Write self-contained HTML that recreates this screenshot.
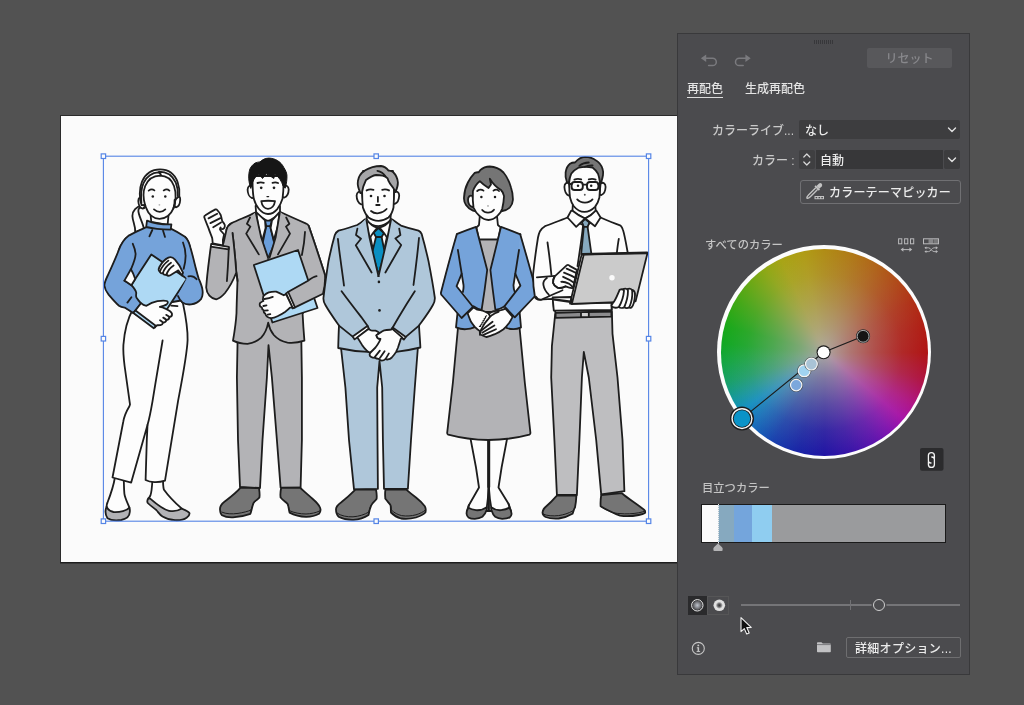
<!DOCTYPE html>
<html lang="ja">
<head>
<meta charset="utf-8">
<title>オブジェクトを再配色</title>
<style>
html,body{margin:0;padding:0;}
body{width:1024px;height:705px;overflow:hidden;background:#525252;position:relative;font-family:"Liberation Sans","Noto Sans CJK JP",sans-serif;}
.abs{position:absolute;}
.t{will-change:transform;}
#artboard{left:60px;top:115px;width:619px;height:446px;background:#fbfbfb;border-left:1px solid #2b2b2b;border-top:1px solid #2b2b2b;border-bottom:1px solid #1e1e1e;box-shadow:0 0.6px 0 #2a2a2a;box-sizing:content-box;}
#art{left:0;top:0;width:1024px;height:705px;}
#panel{left:677px;top:33px;width:293px;height:642px;background:#4b4b4e;border:1px solid #39393b;box-sizing:border-box;}
.t{white-space:nowrap;font-weight:500;}
.lbl{color:#c9c9c9;font-size:12px;}
.dd{position:absolute;background:#3d3d3f;border-radius:2px;}
</style>
</head>
<body>
<div id="artboard" class="abs"></div>
<svg id="art" class="abs" width="1024" height="705" viewBox="0 0 1024 705">
<defs>
<style>
.s{stroke:#1d1d1d;stroke-width:1.8;stroke-linejoin:round;stroke-linecap:round;}
.l{fill:none;stroke:#1d1d1d;stroke-width:1.8;stroke-linejoin:round;stroke-linecap:round;}
.w{fill:#fdfdfd;}
.bl{fill:#75a3da;}
.lb{fill:#aed9f4;}
.gy{fill:#b3b3b6;}
.sh{fill:#757575;}
.sg{fill:#afc7da;}
path.bl:not(.s){stroke:#75a3da;stroke-width:.7}
path.gy:not(.s){stroke:#b3b3b6;stroke-width:.7}
path.sg:not(.s){stroke:#afc7da;stroke-width:.7}
</style>
</defs>
<g id="fig1">
  <!-- ponytail -->
  <path class="s w" d="M142 205.3 C136.5 206.5 132.3 210.5 132.4 216 C132.6 221.5 135.6 225.5 135.2 232 L144 229 C142.8 222  137.8 214.5 138.4 210 C138.8 208 140.5 207 142.5 207.6 Z"/>
  <!-- neck -->
  <path class="s w" d="M150.5 214 L151.3 222 L167.6 225 L168.6 214 Z"/>
  <!-- blouse torso -->
  <path class="s bl" d="M146.3 227.2 C140 230 134 232.6 128.8 235.6 C123.5 239.5 120.5 245 118.6 250.5 L126 300 L150 305 L182 302 L192 290 L190 247.5 C188.8 242.5 187.5 239 185 236.8 C180 233.5 175.5 230.8 170.8 228.6 Z"/>
  <!-- collar -->
  <path class="s bl" d="M147 220.6 C154 223.4 163 224.6 171.4 224.4 L170.7 229.6 C162 229.5 153 228.7 146.2 226.9 Z"/>
  <path class="l" d="M152.3 230 L149.4 236.3 M163 230.6 L165 236.9"/>
  <!-- left foot -->
  <path class="w" d="M114.6 476 C113 488 110 496 107.5 502.5 C106 506.5 105.3 510 105.6 513.8 L130 509 C128 504 125 498 124.4 493.8 C124 490 124 486 123.8 478 Z"/>
  <path class="l" d="M114.8 478 C113.4 487 110 496 107.5 502.5 C106.8 504 106.5 505.4 106.6 506.5 M123.8 480 C124 486 124 490 124.4 493.8 C125 498 128 504 129.4 507.6"/>
  <path class="s gy" d="M106.6 506.5 C105.2 510 105 514.5 107.5 518.2 C111 520.6 117 520.6 121.3 520 C126 519 129.6 516.5 129.8 512 C130 510 129.8 508.6 129.4 507.6 C127 510.5 120 512.4 113.5 512 C110 511.5 107.8 509.5 106.6 506.5 Z"/>
  <!-- right foot -->
  <path class="w" d="M152.4 478 C152 488 151.5 492.5 150.4 495.5 C149.6 497.2 148.6 498.2 148 498.8 L160 509 L181.5 509 C176 503.5 168.5 496 163.8 489.4 C163.2 487 163 484.5 163 478 Z"/>
  <path class="l" d="M152.4 480 C152 488 151.5 492.5 150.4 495.5 C149.6 497.2 148.8 498 148.4 498.4 M163 479 C163 484.5 163.2 487 163.8 489.4 C168.5 496 176 503.5 181.8 508.6"/>
  <path class="s gy" d="M148.4 498.4 C147.2 500 147 501.6 147.8 503 C150 505.5 153.5 507.5 156.3 510 C158.5 512.5 160 515 162.5 516.5 C166 518.6 170.5 520 175 520.2 C179.5 520.4 184 519.6 186.6 517.8 C189 516 189.8 514.2 189.4 513 C188.5 511.6 186 510.3 181.8 508.6 C178 511 173 511.6 169 510.8 C163 509.5 157 504.5 150.2 498.6 Z"/>
  <!-- pants -->
  <path class="s w" d="M133 309 C128 318 124.5 330 123.4 345 C123 352 123.6 358 124.6 366 L130 404.4 L129.4 406.3 C126 412 124 417 123.2 422 L112.5 477.5 L131.2 482.6 L147.5 425 L146.8 440 L145.6 480 C150 482.4 158 483 165 480.6 L178 401.3 C182 380 187 355 187.6 340 C187.8 330 186.5 320 183 303.5 L181 300.5 Z"/>
  <path class="l" d="M162.6 340.5 C160 355 156 380 152.5 401.3 C151 410 149.5 418 147.5 425 M171.2 305.6 L177.5 306.2"/>
  <!-- folder -->
  <path class="s lb" d="M151.3 254.4 L186.9 278.8 L155 327.5 L119.4 303.2 Z"/>
  <!-- her left arm (viewer right) -->
  <path class="bl" d="M185 236.9 C188 239.5 189.4 243.5 190.4 247.5 C192.5 254.5 194 261 195.3 266.3 C196.5 271 197.6 275.5 198.8 278.8 C200.5 282.5 202 286 202.5 290 C203 294 202.6 296.5 201.2 298.8 C198.5 302 195 303.8 191.2 304.4 C187.5 304.8 184.5 304 182.4 302.4 C180.5 300.8 179 298.5 178 296 L186.9 278.8 C185 275 184 272 183.8 268.8 C185 264.5 185.8 260.5 185.6 256 C185.4 251.5 184.5 247 183 242.5 Z"/>
  <path class="l" d="M185 236.9 C188 239.5 189.4 243.5 190.4 247.5 C192.5 254.5 194 261 195.3 266.3 C196.5 271 197.6 275.5 198.8 278.8 C200.5 282.5 202 286 202.5 290 C203 294 202.6 296.5 201.2 298.8 C198.5 302 195 303.8 191.2 304.4 C187.5 304.8 184.5 304 182.4 302.4 C180.5 300.8 179 298.5 178 296"/>
  <path class="l" d="M183 242.5 C184.8 247 185.6 252 185.6 256 C185.6 260.5 184.8 264.8 183.7 268.8 M188.4 276.4 C191.5 275.6 194.6 276.8 196.6 279.2"/>
  <!-- upper hand -->
  <path class="s w" d="M183 272.6 C181.5 268.5 178.5 263.5 175 259.6 C173 257.4 170.6 256.6 168.4 257.6 C164.6 259.4 161.4 263.2 159.4 267 C158.4 269 158.4 270.8 159.8 271.6 C160.4 273 161.6 273.6 162.8 273.2 C163.6 274.6 165 275.2 166.4 274.6 C167.4 275.8 169 276 170.4 275.2 C172.6 274 175.6 272 178.4 270.4 L182 275.6 Z"/>
  <path class="l" d="M159.8 271.6 C161.4 267.6 164.4 263.6 168.4 260.6 M162.8 273.2 C164.2 269.2 167.2 265.4 171 262.8 M166.4 274.6 C167.6 271 170.2 267.6 173.6 265.4"/>
  <!-- her right arm (viewer left) -->
  <path class="bl" d="M128.8 235.6 C123.5 239.5 120.5 245 118.6 250.5 C114.5 261 110.5 269.5 107.5 276 C105.6 280 104.4 283 104.4 285.5 C104.8 289 106.5 292 108.6 294.6 C112 298.6 115.5 302.8 119 305.8 C120.6 307 122.6 307.4 124.6 307.6 L133.4 313 L141 303.4 C139 301 137.4 299 136.4 297.4 C135.6 295.8 136.4 294.2 136.2 292.6 C135.6 290.2 133.6 287.6 131.4 285.2 C129.2 283.4 126.8 281.8 124.4 280.6 C127 277 129 273.5 130.6 270 C133 264.5 135.6 259 135.6 253.8 C135.4 250 134 246.5 132.8 243.8 Z"/>
  <path class="l" d="M128.8 235.6 C123.5 239.5 120.5 245 118.6 250.5 C114.5 261 110.5 269.5 107.5 276 C105.6 280 104.4 283 104.4 285.5 C104.8 289 106.5 292 108.6 294.6 C112 298.6 115.5 302.8 119 305.8 C120.6 307 122.6 307.4 124.6 307.6 L133.4 313 L141 303.4 C139 301 137.4 299 136.4 297.4 C135.6 295.8 136.4 294.2 136.2 292.6 C135.6 290.2 133.6 287.6 131.4 285.2 C129.2 283.4 126.8 281.8 124.4 280.6"/>
  <path class="l" d="M132.8 243.8 C134 246.5 135.4 250 135.6 253.8 C135.6 259 133 264.5 130.6 270 M131.4 297.2 L127.4 302.6"/>
  <path class="s w" d="M130.9 269.2 L124.4 280.6 L131.4 285.2 L135.2 279 C134.2 275.6 132.8 272.2 130.9 269.2 Z"/>
  <!-- lower hand -->
  <path class="s w" d="M141 303.2 L135 311 L155 326.2 C156.4 325.4 158 325 160.6 325 C162 324.8 162.8 323.8 163 322.6 C165 322.6 166.2 321.6 166.4 320 C168.4 319.8 169.4 318.6 169.4 317 C171.2 316.8 172.2 315.6 172 313.8 C171.4 311.8 168.6 310 165.4 308.6 C163.4 307.6 161.4 307 159.8 306.8 C162 306.4 164.6 305.6 166.4 304.6 C168 303.4 168.4 301.8 166.8 301 C164.4 300.2 160.6 300.6 157.4 301.2 C153 302 149 304 146.4 305.8 C144.4 305.6 142.4 304.6 141 303.2 Z"/>
  <path class="l" d="M163 322.6 C162 321.6 161 320.8 160 320.2 M166.4 320 C165.4 319 164.4 318.2 163.2 317.6 M169.4 317 C168.4 316 167.4 315.2 166.2 314.8"/>
  <path class="s lb" d="M133.1 312.8 L153.8 328.2 L155.7 325.7 L135.5 310.5 Z"/>
  <!-- head -->
  <path class="s w" d="M143 197.6 C140.6 196 138.2 197.6 138.3 201 C138.5 204.6 140 208 142.6 208.6 C144 208.6 144.8 207.6 145.2 206.4 Z"/>
  <path class="s w" d="M176.2 196 C178.6 194.8 180.6 196.6 180.2 200 C180 203.6 178.6 206.8 176 207.3 C175 207.3 174.4 206.6 174.2 205.4 Z"/>
  <path class="s w" d="M141.6 205.2 C139.2 199 139 189 142 181.6 C145.6 173.4 152.6 169.4 160 169.4 C168 169.4 174.6 174 177.6 182 C179.4 187 179.8 192 179.3 196.4 L174.6 200 C174.8 204 174.2 206.4 173.4 208.4 C171 214.6 165.6 218.8 159.5 218.8 C153.6 218.8 148.4 214.4 146 207.6 C145.6 206.6 145.4 205.8 145.2 205 Z"/>
  <path class="l" d="M141.4 203 C140.6 195 141.4 187.6 143.6 182.8 C146.6 176.4 152.6 172.6 158 172.4 C159.6 172.6 160.6 173.6 161 175.2 M159 171.6 C166.4 171.6 172.6 175.6 175.8 182.6 C177.6 187 178.1 192 177.8 196"/>
  <path class="l" d="M145.2 205.4 C143.2 199 143.2 191 145.2 186 C148 179.6 153.6 175.8 160 175.7 C166.6 175.8 171.6 179.6 174 186 C175.4 190 175.8 194 175.6 198 C175.4 202 174.6 205.4 173.4 208.4"/>
  <path class="l" d="M148.7 190.6 C150.6 189.2 152.8 189.2 154.4 190.4 M163.7 190.4 C165.6 189.2 167.8 189.2 169.4 190.6 M154 209.4 C157.6 212.6 162 212.6 165.3 209.4" />
  <circle cx="152.8" cy="196.5" r="1.25" fill="#1d1d1d"/><circle cx="165.3" cy="196.5" r="1.25" fill="#1d1d1d"/>
  <circle cx="159.4" cy="204.8" r="0.9" fill="#b4b4b4"/>
  <circle cx="143.8" cy="207.6" r="1" fill="#1d1d1d"/><circle cx="175.3" cy="206.4" r="1" fill="#1d1d1d"/>
</g>
<g id="fig2">
  <!-- trousers -->
  <path class="s gy" d="M238 318 L236.9 377.5 L238 440 L240 487 L260 488 L262.5 440 L266.9 377.5 L268.5 345.2 L271.9 377.5 L276.9 440 L280.6 487.6 L300.6 487.4 L301.9 440 L301.9 377.5 L301 318 Z"/>
  <!-- shoes -->
  <path class="s sh" d="M240.6 487.6 C236 493 230 497.5 225 501.3 C221.5 504 219.8 506.5 220 509.5 C220.2 512.5 220.8 514.2 222 515.2 C225 517 229 517.6 233 517.4 C239 517 245.5 515.6 250.4 513.8 C252 509.5 252.2 505 253.8 502.5 C255.5 500.5 258 499.5 259.4 497.5 C260 494.5 259.4 491 259 488.2 Z"/>
  <path class="l" d="M222 512.2 C226 514 232 514.2 238 513.4 C243 512.6 248 511.4 251 510 C252.6 506 253 503.6 254.2 502.4 C256 500.6 258.4 499.6 259.4 497.5" style="stroke-width:1"/>
  <path class="s sh" d="M281.2 487.8 C280.4 491.5 280.2 495 280.6 497.5 C282.5 500 285.5 501.8 287.5 503.8 C289 506.5 288.6 510 289.6 512.6 C294 515 300 516.6 306.2 516.8 C311 516.8 316 515.6 319 513.8 C320.6 512 320.8 509.5 320 507.5 C318.5 504.2 315.5 501.4 312.5 498.8 C308.5 495.2 304 491.4 300 487.6 Z"/>
  <path class="l" d="M280.6 497.5 C282.5 500.4 285.8 502 287.6 504 C289 506.4 288.6 509 289.4 510.6 C294 512.8 300 514 306 514 C311 513.8 316 512.8 319.6 511" style="stroke-width:1"/>
  <!-- folder back (below arm) -->
  <!-- jacket body -->
  <path class="s gy" d="M255.2 212.6 C247 216.5 238 220 231.4 223.2 C228.6 224.8 227.2 227 226.4 230 L232.5 233 C234 245 235.4 260 236.3 272.5 C237 277 237.5 279 237.5 281 C237 295 236.6 305 236.5 313 C236 322 234.5 332 233 340.6 C237 342.6 242 343.8 247.5 343.8 C252.5 343.2 257.5 341 261.2 337.6 C264.5 334 267 329 268.2 322.6 C269 327 271 331.5 273.8 335 C277.5 339.2 282 341.6 287.5 342.6 C293 343.2 299 342.4 304.4 340.6 C303.6 331 303 322 302.6 313.8 L325 275 C321 262 314.5 243 308.8 226 C308 224.5 307.2 223.8 306.2 223.6 C298 220 289 216 280.4 212 Z"/>
  <!-- shirt -->
  <path class="s w" d="M256 212.8 L261.2 237.5 L268 258.8 L275.6 237.5 L279.6 212.8 Z"/>
  <!-- neck -->
  <path class="s w" d="M255.6 206 L256.2 214 L268 221.6 L280 214 L280 206 Z"/>
  <!-- tie -->
  <path class="s" style="fill:#6a9edb" d="M265 220.6 L272 220.6 L270.2 226.2 L274.4 243.8 L268 258.4 L262.5 243.8 L266.2 226.2 Z"/>
  <path class="l" d="M266.2 226.2 L270.2 226.2"/>
  <!-- collars -->
  <path class="s w" d="M256.2 212.2 L258 225.6 L262 241.2 L265.6 228 L265 220.4 Z"/>
  <path class="s w" d="M279.5 212.2 L278 225.6 L273.8 240 L270.6 228 L272 220.4 Z"/>
  <!-- jacket inner edges & lapels -->
  <path class="gy" d="M255.6 212.6 L250 217.5 L246.9 223.8 L250.4 226.6 L246.2 233.6 L258.8 254.4 L268 258.8 L261.2 237.5 Z"/>
  <path class="l" d="M258.8 254.4 L246.2 233.6 L250.4 226.6 L246.9 223.8 L250 217.5 M255.8 212.8 L261.2 237.5 L268.4 258.8"/>
  <path class="gy" d="M280.2 212.2 L286.2 217.5 L289.4 223.8 L286 226.6 L290 233.6 L278 254.4 L269 258.6 L275.6 237.5 Z"/>
  <path class="l" d="M278 254.4 L290 233.6 L286 226.6 L289.4 223.8 L286.2 217.5 M279.8 212.6 L275.6 237.5 L269.6 257.6"/>
  <path class="l" d="M305 232 C304.6 240 303.4 248 301.9 255"/>
  <!-- folder -->
  <path class="s lb" d="M253.8 265 L298 250 L317.5 308 L272.4 322.5 Z"/>
  <!-- left arm (viewer right) forearm -->
  <path class="gy" d="M308.8 226 C314.5 243 321 262 325 275 C325.4 282 324.6 288 323 293.8 L294.5 307.6 L286.4 292.6 L316.2 276.2 Z"/>
  <path class="l" d="M308.8 226 C314.5 243 321 262 325 275 C325.4 282 324.6 288 323 293.8 L294.5 307.6 M288.4 291.8 L307.6 281 C310.6 278.8 313.6 276.6 316.6 276.2"/>
  <path class="s w" d="M286 293.4 L288.2 292 L295 307.4 L292.6 308.4 Z"/>
  <!-- hand on folder -->
  <path class="s w" d="M263.8 295.6 C265.5 294 267 293 268.8 292.4 C271.5 291.6 274 291.4 276.2 291.6 C279 292.6 281.5 294 283.8 295.3 L286 294 L292.4 307.4 L290 307.6 C288.5 309.2 286.8 310.6 285 311.9 C282.5 313.6 280 315 277.5 316.2 C275.5 317.2 273.4 318 271.2 318.1 C269.8 318 268.4 317.6 267.5 316.9 C266.4 316.2 265.6 315 265.3 313.8 C264.2 313 263.4 311.6 263.4 310 C262.4 309.6 261.9 308.6 261.9 307.5 C260.6 307 259.6 306.2 259.7 305 C259.6 304 259.8 303.2 260.3 302.8 C261.2 302 262.4 301.4 263.4 301 C262.8 300 262.8 298.8 263.1 298 C263 297.2 263.2 296.4 263.8 295.6 Z"/>
  <path class="l" d="M264.4 299 C267 298.6 270 298 272.8 296.9 M263.4 306 L266.5 305.3 M264.7 310.6 L267.8 310.3 M267.8 314.7 L270.3 314.2"/>
  <!-- right arm raised (viewer left) -->
  <path class="gy" d="M231.4 223.2 C228.6 224.8 227.2 227 226.4 230 C225.6 234 224.8 238 223.6 243.4 L210.8 246.6 C209 260 207 275 206.2 287.5 C206.4 291 207.6 293.6 209.4 295.6 C211.4 297.8 213.6 299 216.2 299.4 C219.4 298.6 222.4 296 225 293 C229 288 233 281 236.3 272.5 C235.4 260 234 245 232.5 233 Z"/>
  <path class="l" d="M231.4 223.2 C228.6 224.8 227.2 227 226.4 230 C225.6 234 224.6 238 223.4 243.4 M210.8 246.6 C209 260 207 275 206.2 287.5 C206.4 291 207.6 293.6 209.4 295.6 C211.4 297.8 213.6 299 216.2 299.4 C219.4 298.6 222.4 296 225 293 C229 288 233 281 236.3 272.5 M232.5 233 C234 245 235.4 260 236.3 272.5 C237 277 237.5 279 237.5 281 M228.8 247.6 C228.4 258 227.8 270 226.9 281.2"/>
  <path class="s w" d="M211.2 243.8 L228.8 246.9 L228.6 249.4 L210.8 246.6 Z"/>
  <!-- fist -->
  <path class="s w" d="M212.7 243.4 C212.6 241.5 212.5 239.8 212.2 238.1 C211 234.8 209.6 231.5 208.5 228.1 C207 224.4 205.4 220.6 204.2 217 C204.2 216.2 204.6 215.6 205.4 215.2 C208.6 213.2 212 211.2 215.4 209.4 C216 209.2 216.8 209.4 217.2 210 C218.6 211.5 219.8 213.2 220.7 215 C221.4 217 221.8 219 222.2 221.2 C223.2 222.4 224.2 223.6 224.8 225 C225 226.2 224.8 227.2 224.1 228.1 C223.2 229.2 222 229.4 221 228.6 C220.6 228.2 220.6 227.8 220.7 227.5 C220.2 228 220 228.8 220 229.4 C221.2 231.2 222.8 232.8 224.1 234.4 C223.6 236.4 223.2 238.2 222.9 240 L223 245.4 Z"/>
  <path class="l" d="M208.5 218.4 L217.2 213.8 M210.4 223.1 L220.4 218.1 M213.2 227.2 L221 222.5"/>
  <!-- head -->
  <path class="s w" d="M252.8 186 C250.2 184.6 247.8 186 247.6 189.5 C247.6 193 249.2 197 251.8 198 C252.8 198.2 253.6 197.6 254 196.6 Z"/>
  <path class="s w" d="M283.2 186 C285.8 184.6 288.6 186 288.7 189.5 C288.6 193 287 196.6 284.4 197.5 C283.4 197.7 282.6 197 282.2 196 Z"/>
  <path class="s w" d="M252.6 176 C252.4 184 252.6 192 253.8 198.8 C255 203 256.5 206 258.8 208.8 C261.5 212 264.5 214 268 214 C271.5 214 274.8 212 277.5 208.8 C279.6 206 281.2 203 282.5 198.8 C283.4 192 283.8 184 283.4 176 Z"/>
  <path d="M250.8 188.4 C249.2 184 248.4 179 248.8 175 C249 172.4 249.4 170.4 250 168.8 C251.2 166.4 252.8 164.6 255 163.1 C256.6 162.4 258.2 162 260 161.9 C262.4 159.6 265.4 158.2 268.8 158.1 C272 158.2 275 159 277.5 160.6 C280.2 162.2 282.4 164.6 283.8 167.5 C285.4 170 286.6 172.4 286.9 175 C287.2 179.4 286.4 184 285.2 188.2 L283.1 186.2 C282.4 183.6 281.4 181.4 280 179.4 C278.4 177.4 276.8 175.4 275 173.8 L273.8 178.5 C271.4 176.6 268.8 175 266.2 173.8 L262.5 178.5 C261.4 176.8 260.2 175.4 258.8 174.4 C257.6 175 256.6 175.8 255.6 176.9 C254.2 178.6 253.2 180.6 252.5 182.6 Z" fill="#161616" stroke="#161616" stroke-width="1" stroke-linejoin="round"/>
  <path class="l" style="stroke-width:1.9" d="M257.5 183 C259.4 182.2 261.8 182.2 263.8 182.8 M272.5 182.8 C274.4 182.2 276.4 182.2 278 183"/>
  <circle cx="261.2" cy="187.8" r="1.35" fill="#1d1d1d"/><circle cx="274" cy="187.8" r="1.35" fill="#1d1d1d"/>
  <path class="l" d="M267 196.6 L268.6 196.6" style="stroke-width:1.3"/>
  <path class="s w" d="M261.3 201.2 C265.8 200.6 270.4 200.6 275 201.2 C274.4 205.6 271.6 208.8 268 208.8 C264.6 208.8 261.9 205.6 261.3 201.2 Z"/>
</g>
<g id="fig3">
  <!-- trousers -->
  <path class="s sg" d="M340.8 346 L345.4 387.5 L349 440 L354 489.4 L377.9 488.8 L377.5 440 L377.2 387.5 L379.5 361.2 L382.2 387.5 L382.9 440 L384 488.8 L407.9 488.8 L411 440 L414.8 387.5 L418 346 Z"/>
  <!-- shoes -->
  <path class="s sh" d="M355.4 489.6 C351 494 346 498.5 341 502.5 C337.5 505 335.8 507 336 509.6 C336 513 337 515.5 339 517 C343 519 348 520 353.5 519.8 C359 519.4 364.5 517.6 368.5 515 C369.5 511 370 506.5 372.2 503.8 C373.6 502 375.6 500.6 376.6 498.8 C377 495.6 376.6 492.6 376 489.6 Z"/>
  <path class="l" style="stroke-width:1" d="M337 513 C341 516 347 517 353 516.8 C359 516.4 364.6 514.6 368.8 512 C369.6 508.6 370.4 505.6 372.4 503.6"/>
  <path class="s sh" d="M385.4 489.6 C385 492.6 385 496 385.4 498.8 C387 501 389 503 390.4 505 C391.2 507.5 390.6 510 391 512.5 C394 515.6 397.4 517.6 401 518.5 C406 519.2 411 518.8 416 517.5 C420 516.2 423.4 514.6 425.4 512.5 C426 510.4 425.8 508.2 424.8 506.2 C422.5 503 419.4 500.2 416 497.5 C412.6 495 409.4 492.4 406 489.4 Z"/>
  <path class="l" style="stroke-width:1" d="M385.4 498.8 C387 501.4 389.4 503.2 390.6 505.4 C391.4 507.4 391 509 391.4 510 C394.4 513 398 514.8 401.6 515.6 C406.6 516.4 411.4 516 416 514.8 C420 513.6 423.2 512 425.2 510.2"/>
  <!-- jacket body -->
  <path class="s sg" d="M364.8 219.4 C362.5 221.5 360 223.4 357.2 225 C351 227.2 344.6 229 338.5 230.6 C336.8 231.6 335.6 233 334.8 235 C332.5 243 330.4 252 328.5 261.2 C326.6 273 325 285 323.5 297.5 C323.2 300 323.8 302.6 325.4 305 C329 311.5 334 318.5 339 325.6 C338.6 333 338.4 340.5 338.2 348 C348 350.2 358 351.4 367.9 351.9 L396 351.9 C404.5 351 412.5 349.4 420.4 347.5 C420 340 419.4 332.6 419 325.6 C424.5 318 429.4 311.5 432.9 305 C434.4 302.6 435 300 434.8 297.5 C433 285 430.8 273 428.5 261.2 C426.5 252 424.2 243 421.6 233.8 C421 232.4 420 231.4 418.5 230.6 C412.5 229 406.5 227.4 401 225.6 C398 223.8 395.2 221.6 392.2 219.4 Z"/>
  <!-- shirt -->
  <path class="s w" d="M366.6 219 L378.5 276.2 L390.8 219 Z"/>
  <!-- neck -->
  <path class="s w" d="M366.6 214 L366.8 221.4 C370 224 374 226.2 378.5 226.2 C383 226 387 223.6 390.4 220.8 L390.8 214 Z"/>
  <!-- tie -->
  <path class="s" style="fill:#0b8fc2" d="M373.5 232.6 L378.5 228 L384 233 L381.6 237 L384.8 252.5 L378.5 274.4 L372.2 252.5 L376 237 Z"/>
  <path class="l" d="M376 237 L381.6 237"/>
  <!-- collars -->
  <path class="s w" d="M366.6 219.6 L367.4 229 L369.6 238 L373.4 232.6 L377.4 227.6 C373 226.4 369.4 223.4 366.6 219.6 Z"/>
  <path class="s w" d="M390.8 219.6 L390 229 L387.4 238 L384 233 L379.6 227.6 C384 226.4 388 223.4 390.8 219.6 Z"/>
  <!-- lapels -->
  <path class="sg" d="M365.4 219.6 L357.4 228.6 L356 235 L361 238.8 L355.8 245.2 L371.6 272.5 L378.5 276.2 L369.6 238 L366.6 220 Z"/>
  <path class="l" d="M371.6 272.5 L355.8 245.2 L361 238.8 L356 235 L357.4 228.6 M366.4 219.8 L369.6 238 L378.5 276.2"/>
  <path class="sg" d="M391.4 219.6 L399.2 228.6 L400.4 235 L395.4 238.5 L401.2 245 L385.4 272.5 L378.5 276.2 L387.4 238 L390.8 220 Z"/>
  <path class="l" d="M385.4 272.5 L401.2 245 L395.4 238.5 L400.4 235 L399.2 228.6 M391 219.8 L387.4 238 L378.5 276.2"/>
  <path class="l" d="M337.9 238.8 C339.5 254 342 270 344 285.6 M419 238 C417.5 254 415.5 270 413.5 285 M341.6 291.2 C348 300 355 309 361.6 317.5 L367.9 326.2 M414.8 291.2 C409 300 403.5 309 398.5 317.5 L392.4 328"/>
  <path class="l" d="M339 325.6 L352.7 336.6 M419 325.6 L405.8 336.9"/>
  <circle cx="378.9" cy="281.9" r="1.3" fill="#1d1d1d"/><circle cx="379.5" cy="310.4" r="1.3" fill="#1d1d1d"/>
  <!-- cuffs -->
  <path class="s w" d="M352.7 336.6 L367.4 326 L369 328.6 L354.6 339.4 Z"/>
  <path class="s w" d="M405.8 336.9 L392.7 327.5 L391 330 L403.8 339.6 Z"/>
  <!-- left hand (viewer left) -->
  <path class="s w" d="M357.4 337.4 L368.4 329 C369.4 329.6 370.2 330 371.1 330.3 C372.6 330.6 374 330.5 375.5 330.6 C377 331.2 378.2 332 379.2 332.8 L376.4 335.3 C376.6 336.4 377 337.4 377.7 338.1 C378.6 338.6 379.6 338.7 380.5 338.8 L381 352 L369.6 352.5 C368.4 352 367.6 351.4 366.8 350.6 C365 349 363.6 347.4 362.4 345.6 C360.8 343 359.4 340.2 357.4 337.4 Z"/>
  <!-- right hand -->
  <path class="s w" d="M380.5 332.5 C381.6 331.6 382.8 330.8 384.2 330.3 C386.5 329.8 388.8 329.8 391.1 329.7 L392 328.6 L402.4 337.6 C401.8 338 401.2 338.4 400.8 338.8 C400 341.6 399 344.6 398 347.5 C397.4 349 396.8 350.4 396.1 351.9 C394.8 354 393.4 355.8 391.8 357.5 C390.6 358.6 389.4 359.2 388 359.4 C387 359.6 386.2 359.4 385.6 358.8 C384.4 360 383.2 360.6 381.8 360.6 C380.6 360.4 379.6 359.8 378.6 358.8 C377.4 358.8 376 358.6 374.9 357.8 C373.6 357.8 372.2 357.6 371.1 356.9 C370.2 356.4 369.6 355.6 369.6 354.7 C369.6 353.8 370 353 370.5 352.5 C372.2 350.8 373.8 349.2 375.5 347.5 C377 345.6 378.2 343.8 379.2 341.9 C379.8 340.8 380.2 339.8 380.5 338.8 C379 338.8 378 338.4 377.5 337.8 C377 337 376.6 336.2 376.4 335.3 Z"/>
  <path class="l" d="M379.9 350.6 L374.9 356.9 M384.6 351.2 L379.9 358.1 M388.9 353.4 L386.1 358.1"/>
  <!-- head -->
  <path class="s w" d="M362 192.4 C359.4 190.6 356.8 192 356.6 195.5 C356.6 199.5 358.4 203.6 361.2 204.4 C362.2 204.6 363 204 363.4 203 Z"/>
  <path class="s w" d="M394.2 192.4 C396.6 190.6 399.2 192 399.2 195.5 C399 199.5 397.4 203 394.8 203.8 C393.8 204 393 203.4 392.8 202.4 Z"/>
  <path class="s w" d="M363 171 C361.8 188 361.8 198 362.9 207.5 C364.2 211.5 366 215 368.5 217.5 C371.5 219.8 375 220.8 378.5 220.8 C382 220.8 385.5 219.6 388.5 217.5 C391 215 392.6 211.5 393.5 207.5 C394.2 198 394.4 188 393 171 Z"/>
  <path class="s" style="fill:#a6a6a8" d="M360.4 193 C358 188 357.4 184 357.9 181 C358.6 176.5 361 172.8 364.8 170.6 C369.5 167.6 375.5 166 381 166 C384 166.4 386.5 168 388.5 170.6 C390.4 170.4 392.2 171 393.5 172.5 C396 175 397.6 178.5 397.9 182.5 C398 185.5 397 188.6 395.6 192 C394 188.6 392 186 390 183.6 C388.8 181.6 387.8 180 387.6 178.4 C386.4 177 384.6 176 382.6 175.6 C380 175 377.6 175 376 175 C372.5 175.6 369.5 177.4 366 180 C364 184 362.4 188.6 361.8 193 Z"/>
  <path class="l" d="M377.4 170.8 C380.4 171.4 383.4 173 385.4 176.2"/>
  <path class="l" style="stroke-width:1.9" d="M366.6 190.4 C368.6 189.4 371.4 189.2 373.5 189.8 M382.2 189.8 C384.4 189.2 387 189.4 389 190.4"/>
  <circle cx="371" cy="196" r="1.3" fill="#1d1d1d"/><circle cx="384.5" cy="196" r="1.3" fill="#1d1d1d"/>
  <path class="l" d="M377.9 197 L377.9 201.8 M376.2 205 L379.6 205 M371 211 C375 214.6 382 214 386.6 209"/>
</g>
<g id="fig4">
  <!-- legs -->
  <path class="s w" d="M470.4 438 L476 467.5 L479 487.5 L469 505 L467 511 L488.5 511 L488.5 438 Z"/>
  <path class="s w" d="M507.2 438 L501.6 467.5 L498.5 487.5 L508.5 503.8 L511 511 L489 511 L489 438 Z"/>
  <path class="l" style="stroke-width:3" d="M488.7 440 L488.7 487"/>
  <!-- shoes -->
  <path class="s sh" d="M468.4 507.8 C467 510 466.4 512 466.6 514 C466.8 515.6 467.4 516.6 468.4 517.4 C470.4 518.6 472.6 518.8 474.8 518.8 C477.6 518.6 480.2 518 482.4 516.8 C484.4 515.2 485.8 512.6 486.6 510 C487 509 487 508 486.8 507.2 C483.5 509.6 479.6 510.4 476 510.2 C473 509.8 470.4 509 468.4 507.8 Z"/>
  <path class="s sh" d="M509.4 507.6 C510.8 510 511.6 512 511.6 514 C511.4 515.6 510.8 516.6 509.8 517.4 C507.6 518.6 505 518.8 502.2 518.8 C499.6 518.6 497.2 518 495.2 516.8 C493.2 515.2 492.2 512.6 491.4 510 C491 509 491 508 491.2 507.2 C494.2 509.6 498 510.4 501 510.2 C504.2 509.8 507 509 509.4 507.6 Z"/>
  <path class="l" d="M469 505 C468.4 506 468.2 507 468.4 507.8 M486.8 507.2 C487.6 502 488.2 495 488.5 488.8 M508.5 503.8 C509.2 505.2 509.6 506.4 509.4 507.6 M491.2 507.2 C490.2 502 489.4 495 489 488.8"/>
  <!-- skirt -->
  <path class="s gy" d="M458.5 322 L452.9 382.5 L447.2 432.6 C447 433.6 447.4 434.2 448.2 434.6 C461 438 475 439.8 488.5 440 C502 439.8 517 438 529.4 434.6 C530.2 434.2 530.6 433.6 530.4 432.6 L524.8 382.5 L519 322 Z"/>
  <!-- jacket back hem pieces -->
  <path class="s bl" d="M457.6 312 L456 327.4 C459.4 328.8 462.8 329.4 466 329.2 C469 329 471.8 328.4 474.2 327.4 L476 312 Z"/>
  <path class="s bl" d="M519.6 312 L521 327.4 C518.4 328.6 516 329.2 513.5 329.2 C511 329.2 508.6 328.8 506.6 328 L503 312 Z"/>
  <!-- inner top -->
  <path class="s gy" d="M477 239.4 L500 239.4 L497 312 L480 312 Z"/>
  <!-- neck / chest skin -->
  <path class="s w" d="M479.8 216 L479 225 L476.4 227.6 L479 239.4 L498.2 239.4 L500.6 227.4 L497.9 225 L497 216 Z"/>
  <!-- jacket left half -->
  <path class="bl" d="M476 226.9 C470 229 463.5 231.4 457.2 233.8 C456.4 234.2 456.2 234.6 456.6 235.4 L457.9 250 C459.8 262 461.8 274 463.5 285 L462.9 292 C466.5 297 470 301.6 473.5 306.2 C476.2 308 478.8 309.4 481.6 310 L484.6 290 L487.2 270 Z"/>
  <path class="bl" d="M501 226.9 C507 229 513.5 231.6 520.4 234.4 C521 234.6 521 235 520.4 235.6 L519 250 C517.2 262 515.2 274 513.5 285 L514.8 292 C511.4 297 508 301.6 504.8 306.2 C502 308 498.6 309.4 495.4 310 L492.8 290 L490.4 270 Z"/>
  <path class="l" d="M457.2 233.8 C463.5 231.4 470 229 476 226.9 L487.2 270 L484.6 290 L481.6 310 C478.8 309.4 476.2 308 473.5 306.2"/>
  <path class="l" d="M520.4 234.4 C513.5 231.6 507 229 501 226.9 L490.4 270 L492.8 290 L495.4 310 C498.6 309.4 502 308 504.8 306.2"/>
  <!-- arms -->
  <path class="bl" d="M456.6 234.4 C451 254 446 273 441 292.5 C440.8 293.6 441 294.4 441.6 295 L461.6 318 L472.9 306.8 L456.6 286.2 L461.6 273.8 L457.9 250 Z"/>
  <path class="l" d="M456.8 234.2 C451 254 446 273 441 292.5 C440.8 293.6 441 294.4 441.6 295 L461.6 318 L472.9 306.8 L456.6 286.2 L461.6 273.8"/>
  <path class="bl" d="M520.4 234.4 C526 254 531.4 273 536.6 292.5 C536.8 293.6 536.6 294.4 536 295 L514.8 317.4 L504.4 306.4 L520.4 285.6 L515.4 273.8 L519 250 Z"/>
  <path class="l" d="M520.2 234.2 C526 254 531.4 273 536.6 292.5 C536.8 293.6 536.6 294.4 536 295 L514.8 317.4 L504.4 306.4 L520.4 285.6 L515.4 273.8"/>
  <path class="l" d="M457.9 250 C459.8 262 461.8 274 463.5 285 C463.8 288 463.4 290 462.9 292 M519 250 C517.2 262 515.2 274 513.5 285 C513.4 288 514 290 514.8 292"/>
  <!-- hands -->
  <path class="s w" d="M467.6 313.3 L473.5 307.4 C474.8 308.2 476 309 477.2 309.6 C479 310 480.6 310.2 482.2 310.5 C484.4 311.4 486.6 312.4 488.5 313.6 C489.2 314.4 489.8 315.2 490 316.1 L488 322 L480 334.9 C480 333.6 479.8 332.2 479.8 331.1 C478 329.8 476.4 328.4 474.8 326.8 C473.4 325.2 472.2 323.6 471 321.8 C469.8 319 468.6 316.2 467.6 313.3 Z"/>
  <path class="l" style="stroke-width:1.1" d="M486.6 315.8 L485.4 316.6 L485.6 318 L484.2 318.6 L484.4 320 L483 320.8 L483.2 322.2 L481.8 323 L482 324.4 L480.6 325 L480.6 326.4 L479.4 326.4"/>
  <path class="s w" d="M490 313 C491.2 312.2 492.2 311.6 493.5 311.1 C495.6 310.8 497.6 310.8 499.8 310.5 C501.6 310 503.6 309.4 505.4 308.6 L512.6 316.8 C511.6 318.8 510.4 321 509.1 323 C507.4 325.2 505.6 327.4 503.5 329.2 C500.8 331.2 497.8 332.8 494.8 334.2 C492 335.4 489.4 336.4 486.6 337 C485.2 336.8 484 336.2 482.9 335.5 C481.6 335.2 480.6 334.8 480 334 C480 332.6 480.4 331.2 481 329.9 C482 328 483 326.2 484.1 324.2 C485.4 322.2 487 320.4 488.5 318.6 C489.6 317.2 490.8 316 492.2 314.9 C494 313.6 496.2 312.6 498.5 312 "/>
  <path class="l" d="M492.6 321.8 L481.3 330.5 M494.4 325.5 L482.2 332.7 M496 329.2 L483.5 334.9"/>
  <!-- head -->
  <path class="s" style="fill:#757575" d="M489.8 166.5 C486 166.5 482.6 168 480.2 170.2 C479.6 171 479 171.8 478.5 172.3 C477.2 172.2 475.8 172.4 474.7 172.8 C472 175.6 469.6 179 467.9 182.5 C465.6 187 464.2 192 464 197.5 C463.8 200.5 464.6 203 466 205 C467.8 207.6 470.2 209.6 472.9 210.6 L478 212 L500 212 L502.2 211 C505.4 210.4 508 209.4 509.8 207.5 C511.6 205.4 512.8 202.8 512.9 200 C513 196 512.4 191.6 511 187.5 C509.4 182 507 176.6 503.5 172.5 C499.6 168.6 494.8 166.6 489.8 166.5 Z"/>
  <path class="s w" d="M472.4 196 C470 194.8 468 196.6 468 200 C468.2 203.6 470 206.6 472.6 207 C473.6 207 474.2 206.4 474.4 205.4 Z"/>
  <path class="s w" d="M472.9 191.2 C472.6 197 472.8 202.6 473.5 207.5 C475 211 477 214 479.8 216.2 C482.4 218.6 485.4 220 488.5 220 C491.6 220 494.6 218.6 497.2 216.2 C499.6 214 501.4 211.6 502.2 208.8 C503.2 204.6 503.8 200.4 504 196.2 C503.6 193.6 502.6 191.6 501 190 C496.6 187.6 493 184 489.8 178.8 L491 184.4 L488.5 188 C485.4 186 482.4 184 479.8 181.2 C476.6 183.6 474.4 187 472.9 191.2 Z"/>
  <path class="l" d="M477.2 191 C478.8 189.4 481.6 189.2 483.5 190.6 M493.5 190.6 C495.2 189.2 497.6 189.4 499 191 M482.2 210 C485 213.6 491 213.6 494 209.8"/>
  <circle cx="481.4" cy="197" r="1.25" fill="#1d1d1d"/><circle cx="495" cy="197" r="1.25" fill="#1d1d1d"/>
  <circle cx="488" cy="205.9" r="0.9" fill="#a8a8a8"/>
</g>
<g id="fig5">
  <!-- trousers -->
  <path class="s" style="fill:#bebec0" d="M555.2 314 L551.9 346.2 L551.2 377.5 L554.4 440 L556.9 495 L576.9 495 L579.4 440 L581.9 377.5 L583.8 352 L588.8 377.5 L596.2 440 L601.2 494.4 L624.4 491.2 L622.5 440 L617.5 377.5 L612.5 333.8 L611.9 312 Z"/>
  <!-- shoes -->
  <path class="s sh" d="M556.9 495.6 C553 500 549 504 545 507.5 C543.4 509 542.6 510.6 542.5 512.5 C542.6 514.6 543.6 516 545.6 517 C549.6 518.6 554.4 518.8 558.8 518.5 C563.6 517.8 568.6 516.2 572.5 513.8 C573.6 511.6 573.6 509.6 575 507.5 C575.8 503.6 576.2 499.6 576.4 495.6 Z"/>
  <path class="l" style="stroke-width:1" d="M543 514 C547 516 553 516.2 558.6 515.6 C563.6 514.8 568.4 513.4 572.6 511"/>
  <path class="s sh" d="M601.2 495 C600.6 499 600.4 502.6 600.6 506.2 C603.6 508.2 606.8 509.8 610 511.2 C613.4 513 616.6 514.6 620 515.6 C626 516.6 632.6 516.2 638.8 515 C641.2 514.6 643.4 514 645 513 C645.4 512 645.2 511 644.4 510 C640.6 507 636.6 504 632.5 501.2 C628.8 498.6 625.2 496 621.9 493.2 Z"/>
  <path class="l" style="stroke-width:1" d="M600.6 506.2 C603.6 508.6 607 510 610.2 511.6 C613.4 513 616.6 513.4 620 513.6 C626 514.2 632.6 513.8 638.8 512.8 C641.2 512.4 643.6 511.6 645 510.8"/>
  <!-- belt -->
  <path class="s" style="fill:#8c8c8e" d="M555.6 312.5 L611.4 311.4 L611.4 316.6 L555.6 317.8 Z"/>
  <path class="s" style="fill:#cfcfcf" d="M581 312 L588.8 311.8 L588.8 317 L581 317.2 Z"/>
  <!-- shirt -->
  <path class="s w" d="M567.5 217.5 C560 220.6 552 223.4 545 226.2 C542.6 227.6 541 229.4 540 231.2 C539 233.4 538.4 235.4 538 237.5 C536 250 534.4 262 533 275 C533 282 533.6 290 535 297.5 C535.8 298.6 536.8 299.2 538 299.6 L553 298.8 L553.8 307.5 L555.6 312.6 L611.6 311.4 L612 300 L627.6 252 C626 243 624.4 234 623 230 C622.4 228 621.6 226.6 620.6 225.6 C614 223 607 220.4 600.6 217.5 L585 226 Z"/>
  <path class="l" d="M547.5 242.5 C549 253 550.4 264 551.4 275 M618.8 238.8 C618 243 617.4 248 616.9 252.6"/>
  <!-- neck -->
  <path class="s w" d="M572.8 205 L572.4 212 L585 218.6 L595.8 212 L595.2 205 Z"/>
  <!-- tie -->
  <path class="l" d="M583 226.2 C581.6 240 579.4 253 577.5 266.2"/>
  <path class="s" style="fill:#86a9bf" d="M581.9 222 L585 218.8 L589.4 222.5 L587.6 226.9 L591.4 254 L581.2 254 L583.8 226.9 Z"/>
  <path class="l" d="M583.8 226.9 L587.6 226.9"/>
  <!-- collars -->
  <path class="s w" d="M571.2 210.6 L567.5 217.5 L576.2 226.9 L585 218.5 C580.6 216.6 576.4 214 572.6 210.8 Z"/>
  <path class="s w" d="M596.4 210.6 L600.6 217.5 L595 226.2 L585.2 218.5 C589.4 216.6 592.6 214 595.4 210.8 Z"/>
  <!-- laptop base -->
  <path class="s w" d="M552.6 297.4 L571.2 297 L571.9 303.8 L611.6 302.6 L611.6 310 L553.8 310.6 Z" style="fill:#fdfdfd"/>
  <path class="l" style="stroke-width:2.4" d="M553.4 299.4 L570.6 301.8"/>
  <!-- laptop screen -->
  <path class="s" style="fill:#cbcbcb" d="M583.8 254.4 L647.5 253 L635.6 301.4 L571.9 303.8 Z"/>
  <path class="l" d="M581.6 254.6 L570 303.6 L571.9 303.8 M581.6 254.6 L583.8 254.4"/>
  <path class="l" style="stroke-width:2.6" d="M582.6 254.2 L647 252.8"/>
  <circle cx="612" cy="277.8" r="2.7" fill="#fafafa"/>
  <!-- left arm forearm / cuff -->
  <path class="w" d="M536 276.4 L555 275.8 L562.5 290.2 L540.6 299.9 L536 296.8 Z"/>
  <path class="l" d="M536.9 277.4 L555 275.8 M562.5 290.2 C554 294 547 297 541.6 299.6 C539.4 300.2 537.6 299.4 536 296.8 M546.9 278 C544 280 543 282.6 543.4 284.9 C544 288.6 546 292 548.8 294.6"/>
  <!-- left hand typing -->
  <path class="s w" d="M555 276.1 C558.8 272.6 562.8 269 566.9 265.2 C567.8 264.6 569 265 570 266.1 C572.4 267.4 574.6 268.6 576.9 269.9 L573 288 C571 288.6 568.4 287.6 565.6 286.4 C562.8 287.8 560 288.4 557.5 287.7 C555.4 286.8 553.8 285 553.1 283 C552.8 280.4 553.4 278.2 555 276.1 Z"/>
  <path class="l" d="M566.6 268.6 C570 270 573.4 271.6 576.6 273.3 M564 272.7 C568 274.2 572.2 276 576 278.3 M563.1 276.8 C567 278.4 571 280.4 574.4 283 M561.2 281.8 C563.6 281.6 566.4 282.4 568.8 283.6 C570.4 284.6 571.6 285.8 572.5 287 M554 277.4 C553 280 553 281.6 553.1 283 C553.8 285 555.4 286.8 557.5 287.7 C560 288.4 562.8 287.8 565.6 286.4"/>
  <!-- right hand fingers -->
  <g class="s w">
    <path d="M632.8 290 C634.4 291 635.2 293 635 295 C634.8 298 634.4 300.6 633.8 303.1 C633.2 305.2 632.4 306.8 631.5 307.5 C630.6 308 629.6 308 629 307.4 C629.6 302 630.6 296 631 290.4 Z"/>
    <path d="M628.2 288.9 C630 288.4 631.6 289 632.2 290.6 C632.6 296 631.6 302 629.4 307 C628 308.2 625.6 308.2 624.2 307.2 C625.6 301.6 626.8 295 627 289.6 Z"/>
    <path d="M624 288.9 C625.8 288.4 627.4 289 628 290.6 C628 296 626.6 302 624.2 307.2 C622.6 308.4 620 308 618.8 307 C621 301.4 622.6 295 622.8 289.6 Z"/>
    <path d="M619.6 289.8 C621.4 289 623.2 289 624 290.6 C623.6 296 621.8 302 618.8 307 C616.6 308 613.6 307.8 611.8 306.6 C611.2 305.4 611.6 304.2 612.8 303.2 C615.4 300.4 617.4 295 619.6 289.8 Z"/>
  </g>
  <!-- head -->
  <path class="s w" d="M569.2 183.4 C566.8 181.8 564.4 183.4 564.4 187 C564.6 190.6 566.2 194.6 568.8 195.6 C569.8 195.8 570.4 195.2 570.6 194.2 Z"/>
  <path class="s w" d="M600.6 183.4 C603 181.8 605.6 183.4 605.6 187 C605.4 190.6 604 194 601.4 195 C600.4 195.2 599.8 194.6 599.6 193.6 Z"/>
  <path class="s w" d="M570.5 164 C568.8 180 569 190 570 197.5 C570.8 200.8 572 203.8 573.8 206.2 C576.6 209.6 580.4 211.9 584.4 211.9 C588.4 211.9 592.2 209.8 595 206.9 C597 204.4 598.6 201 599.4 197.5 C600.2 190 600.4 180 598.5 164 Z"/>
  <path class="s" style="fill:#757575" d="M567 182.4 C565.6 178.6 565.2 175 565.6 172.5 C566.2 168.6 567.6 165.6 570 163.8 C571.6 162.8 573.4 162.4 575 162.5 C578 159 581.4 157 585 156.9 C589.4 157 593.4 158.4 596.2 160.6 C599.4 162.6 601.4 165.4 602.5 168.8 C603.2 171 603.4 173 603 175 C602.6 177.6 601.8 180 601.2 182.4 L600 182.4 C599.6 179.4 599 176.6 598 173.8 C596.6 171.2 594.8 169.2 592.5 167.5 C588 166.6 583.4 166.6 578.8 167.5 C575.8 169 573.2 171.2 571.2 173.8 C570 176.6 569.2 179.4 568.8 182.4 Z"/>
  <path class="l" d="M579.4 165.6 C582 163.6 585.4 162.6 588.8 162.5 M585 166.8 C587.4 165.6 590 165.2 592.6 165.4"/>
  <path class="l" style="stroke-width:1.9" d="M574.4 179.6 C576.4 178.8 579.2 178.8 581.2 179.4 M588.8 179.4 C590.8 178.8 593.6 178.8 595.6 179.6"/>
  <g class="l" style="stroke-width:1.9"><rect x="571.6" y="182" width="11.2" height="8" rx="3"/><rect x="587" y="182" width="11.4" height="8" rx="3"/><path d="M582.8 184.6 L587 184.6 M571.6 184.2 L568.8 183.6 M598.4 184.2 L601.6 183.2"/></g>
  <circle cx="578" cy="185.8" r="1.25" fill="#1d1d1d"/><circle cx="591.2" cy="185.8" r="1.25" fill="#1d1d1d"/>
  <circle cx="584.8" cy="194.8" r="0.95" fill="#555"/>
  <path class="l" d="M577.2 199.4 C581 203.6 589 203.6 592.5 199.4"/>
</g>
<g fill="none" stroke="#5585e6" stroke-width="1.1">
  <rect x="103.4" y="156.2" width="545.2" height="365"/>
</g>
<g fill="#fbfbfb" stroke="#5585e6" stroke-width="1.2">
  <rect x="101.2" y="153.9" width="4.4" height="4.6"/>
  <rect x="374.0" y="153.9" width="4.4" height="4.6"/>
  <rect x="646.4" y="153.9" width="4.4" height="4.6"/>
  <rect x="101.2" y="336.4" width="4.4" height="4.6"/>
  <rect x="646.4" y="336.4" width="4.4" height="4.6"/>
  <rect x="101.2" y="518.9" width="4.4" height="4.6"/>
  <rect x="374.0" y="518.9" width="4.4" height="4.6"/>
  <rect x="646.4" y="518.9" width="4.4" height="4.6"/>
</g>
</svg>
<div id="panel" class="abs"></div>
<div class="abs" style="left:814px;top:40px;width:19px;height:4px;background:repeating-linear-gradient(90deg,#37373a 0 1px,transparent 1px 2px);"></div>
<svg class="abs" style="left:677px;top:33px" width="293" height="70" viewBox="677 33 293 70">
  <g fill="none" stroke="#7a7a7e" stroke-width="1.5" stroke-linecap="round" stroke-linejoin="round">
    <path d="M704 58.2 H712.6 a3.7 3.7 0 0 1 0 7.4 H708.6"/>
    <path d="M747.6 58.2 H739.2 a3.7 3.7 0 0 0 0 7.4 H743.2"/>
  </g>
  <path d="M700.9 58.2 L706.2 54.5 V61.9 Z M750.7 58.2 L745.4 54.5 V61.9 Z" fill="#7a7a7e"/>
</svg>
<div class="abs" style="left:867px;top:48px;width:85px;height:20px;background:#58585b;border-radius:2px;"></div>
<div class="abs t" style="left:867px;top:49px;width:85px;height:20px;line-height:20px;text-align:center;color:#88888c;font-size:12px;">リセット</div>
<div class="abs t" id="tab1" style="left:687px;top:82.0px;font-size:12px;line-height:14px;color:#e4e4e4;">再配色</div>
<div class="abs" style="left:687px;top:97px;width:36px;height:1px;background:#dcdcdc;"></div>
<div class="abs t" id="tab2" style="left:745px;top:82.0px;font-size:12px;line-height:14px;color:#e4e4e4;">生成再配色</div>

<div class="abs t lbl" id="l1" style="left:712px;top:124.0px;line-height:14px;">カラーライブ...</div>
<div class="dd" style="left:799px;top:120px;width:161px;height:19px;"></div>
<div class="abs t" id="v1" style="left:805px;top:124.0px;font-size:12px;line-height:14px;color:#ececec;">なし</div>
<svg class="abs" style="left:946px;top:125px" width="12" height="10" viewBox="0 0 12 10"><path d="M2.5 3 L6 6.5 L9.5 3" fill="none" stroke="#e0e0e0" stroke-width="1.4" stroke-linecap="round" stroke-linejoin="round"/></svg>

<div class="abs t lbl" id="l2" style="left:752px;top:154.0px;line-height:14px;">カラー :</div>
<div class="dd" style="left:799px;top:150px;width:16px;height:19px;background:#3f3f41;"></div>
<svg class="abs" style="left:799px;top:150px" width="16" height="19" viewBox="0 0 16 19"><path d="M4.8 7 L7.8 4 L10.8 7 M4.8 12 L7.8 15 L10.8 12" fill="none" stroke="#d8d8d8" stroke-width="1.2" stroke-linecap="round" stroke-linejoin="round"/></svg>
<div class="dd" style="left:816px;top:150px;width:127px;height:19px;background:#373739;border-radius:0;"></div>
<div class="dd" style="left:944px;top:150px;width:16px;height:19px;background:#3c3c3e;"></div>
<div class="abs t" id="v2" style="left:820px;top:154.0px;font-size:12px;line-height:14px;color:#ececec;">自動</div>
<svg class="abs" style="left:946px;top:155px" width="12" height="10" viewBox="0 0 12 10"><path d="M2.5 3 L6 6.5 L9.5 3" fill="none" stroke="#e0e0e0" stroke-width="1.4" stroke-linecap="round" stroke-linejoin="round"/></svg>

<div class="abs" style="left:800px;top:180px;width:159px;height:22px;border:1px solid #707073;border-radius:3px;"></div>
<svg class="abs" style="left:804px;top:182px" width="24" height="20" viewBox="804 182 24 20">
  <g fill="none" stroke="#c4c4c4" stroke-width="1.3" stroke-linecap="round" stroke-linejoin="round">
    <path d="M815.5 188 L808.5 195 Q806.5 197 807 198.3 Q808.3 198.8 810.3 196.8 L817.3 189.8"/>
  </g>
  <path d="M814.5 186.5 L818.8 190.8 L820 189.6 L815.7 185.3 Z" fill="#c4c4c4"/>
  <path d="M816.5 186 L819 183.5 Q820.5 182.5 821.7 183.7 Q822.8 185 821.8 186.3 L819.3 188.8 Z" fill="#c4c4c4"/>
  <rect x="814.5" y="196" width="9.5" height="3.2" fill="#c4c4c4"/>
  <rect x="815.6" y="197" width="1.6" height="1.3" fill="#4c4c4f"/><rect x="818.5" y="197" width="1.6" height="1.3" fill="#4c4c4f"/><rect x="821.3" y="197" width="1.6" height="1.3" fill="#4c4c4f"/>
</svg>
<div class="abs t" id="pk" style="left:829px;top:186.0px;font-size:12px;line-height:14px;color:#ececec;letter-spacing:0.2px;">カラーテーマピッカー</div>

<div class="abs t" id="l3" style="left:705px;top:238px;font-size:11.3px;line-height:14px;color:#c4c4c4;">すべてのカラー</div>
<svg class="abs" style="left:890px;top:230px" width="60" height="30" viewBox="890 230 60 30">
  <g fill="none" stroke="#b9b9bb" stroke-width="1">
    <rect x="898.6" y="238.8" width="3.2" height="5"/><rect x="904.6" y="238.8" width="3.2" height="5"/><rect x="910.5" y="238.8" width="3.2" height="5"/>
    <rect x="923.5" y="238.8" width="15" height="5"/>
    <path d="M902 249.6 H911"/>
    <path d="M925 247.8 H928.5 C931 247.8 931.5 251.6 934 251.6 H936.5 M925 251.6 H928.5 C931 251.6 931.5 247.8 934 247.8 H936.5" stroke-width="0.9"/>
  </g>
  <g fill="#b9b9bb">
    <path d="M900.6 249.6 L903.4 247.4 V251.8 Z M912.2 249.6 L909.4 247.4 V251.8 Z"/>
    <path d="M938 247.8 L935.8 246.2 V249.4 Z M938 251.6 L935.8 250 V253.2 Z M924.4 247.8 L926.4 246.4 V249.2 Z M924.4 251.6 L926.4 250.2 V253 Z"/>
    <rect x="928.5" y="239.3" width="4.5" height="4" opacity="0.55"/><rect x="933.5" y="239.3" width="4.5" height="4" opacity="0.4"/>
  </g>
</svg>

<div class="abs" id="wheel" style="left:717px;top:245px;width:214px;height:214px;border-radius:50%;background:#fcfcfc;"></div>
<div class="abs" style="left:720.5px;top:248.5px;width:207px;height:207px;border-radius:50%;background:
radial-gradient(circle closest-side, rgba(174,168,162,1) 0%, rgba(174,168,162,0.86) 10%, rgba(174,168,162,0.66) 25%, rgba(174,168,162,0.38) 50%, rgba(174,168,162,0.14) 75%, rgba(174,168,162,0) 100%),
conic-gradient(from 90deg,
 #b01414 0deg, #b01440 15deg, #b01484 30deg, #a814a8 40deg, #8214b0 50deg, #6014ae 60deg, #3a14a8 75deg, #2014a4 90deg,
 #1824a6 105deg, #1840ae 120deg, #1670bc 135deg, #0e90c4 145deg, #14989c 153deg, #16a068 163deg, #12a640 175deg,
 #10a822 185deg, #18a818 195deg, #40a814 210deg, #70a814 225deg, #90a814 235deg, #a8a414 245deg, #b09c14 258deg,
 #b08c14 270deg, #b07a16 285deg, #b06418 300deg, #b04a18 315deg, #b03016 330deg, #b01e14 345deg, #b01414 360deg);"></div>
<svg class="abs" style="left:700px;top:240px" width="260" height="240" viewBox="700 240 260 240">
  <path d="M742 418.6 L823.6 352.3 L863.1 336.3" fill="none" stroke="#1c1c1c" stroke-width="1.2"/>
  <circle cx="796.2" cy="385.1" r="6.9" fill="#3a3a3a" opacity="0.75"/>
  <circle cx="796.2" cy="385.1" r="5.7" fill="#7ba7dc" stroke="#f4f4f4" stroke-width="1.2"/>
  <circle cx="804.2" cy="370.8" r="7.1" fill="#3a3a3a" opacity="0.75"/>
  <circle cx="804.2" cy="370.8" r="5.9" fill="#a0d3f1" stroke="#f4f4f4" stroke-width="1.2"/>
  <circle cx="811.4" cy="364.1" r="7.1" fill="#3a3a3a" opacity="0.75"/>
  <circle cx="811.4" cy="364.1" r="5.9" fill="#a9c3d6" stroke="#f4f4f4" stroke-width="1.2"/>
  <circle cx="823.6" cy="352.3" r="7" fill="#1c1c1c"/>
  <circle cx="823.6" cy="352.3" r="5.9" fill="#ffffff"/>
  <circle cx="863.1" cy="336.3" r="7" fill="#2a2a2a" />
  <circle cx="863.1" cy="336.3" r="5.9" fill="#151515" stroke="#b8b8b8" stroke-width="0.9"/>
  <circle cx="742" cy="418.6" r="12" fill="#1c1c1c"/>
  <circle cx="742" cy="418.6" r="10.6" fill="#f6f6f6"/>
  <circle cx="742" cy="418.6" r="9.2" fill="#1c1c1c"/>
  <circle cx="742" cy="418.6" r="8.3" fill="#0a93c8"/>
  <rect x="920" y="448" width="23.5" height="22.7" rx="2" fill="#2b2b2d"/>
  <path d="M934.4 458.6 V455.6 a3 3 0 0 0 -6 0 V460.4 a2.6 2.6 0 0 0 2.6 2.6 M928.4 461.4 V464.4 a3 3 0 0 0 6 0 V459.6 a2.6 2.6 0 0 0 -2.6 -2.6" fill="none" stroke="#f4f4f4" stroke-width="1.3" stroke-linecap="round"/>
</svg>

<div class="abs t" id="l4" style="left:702px;top:481px;font-size:11.3px;line-height:14px;color:#c4c4c4;">目立つカラー</div>
<div class="abs" style="left:701px;top:504px;width:245px;height:39px;background:#1a1a1a;"></div>
<div class="abs" style="left:702px;top:505px;width:243px;height:37px;background:linear-gradient(90deg,#fbfbfb 0 16px,#86a9bf 16px 32px,#74a5dc 32px 50px,#8fcdf0 50px 70px,#9a9b9d 70px);"></div>
<div class="abs" style="left:717.5px;top:504px;width:1px;height:40px;background:repeating-linear-gradient(180deg,#f0f0f0 0 1px,rgba(240,240,240,0.35) 1px 2px);"></div>
<svg class="abs" style="left:710px;top:542px" width="16" height="12" viewBox="710 542 16 12"><path d="M718 543.6 L722 547.2 Q722.6 547.8 722.6 548.6 V550 Q722.6 551 721.6 551 H714.4 Q713.4 551 713.4 550 V548.6 Q713.4 547.8 714 547.2 Z" fill="#b4b4b6"/></svg>

<div class="abs" style="left:688px;top:596px;width:19px;height:19px;background:#2a2a2c;"></div>
<div class="abs" style="left:707px;top:596px;width:22px;height:19px;box-shadow:inset 0 0 0 1px rgba(110,110,105,0.35);"></div>
<svg class="abs" style="left:686px;top:594px" width="50" height="24" viewBox="686 594 50 24">
  <defs>
    <radialGradient id="g1"><stop offset="0" stop-color="#bcc2cc"/><stop offset="0.45" stop-color="#8e9096"/><stop offset="1" stop-color="#47474a"/></radialGradient>
    <radialGradient id="g2"><stop offset="0" stop-color="#303032"/><stop offset="0.3" stop-color="#6a6a6c"/><stop offset="0.62" stop-color="#e4e4e4"/><stop offset="1" stop-color="#dadada"/></radialGradient>
  </defs>
  <circle cx="697.3" cy="605.3" r="4.9" fill="url(#g1)"/>
  <circle cx="697.3" cy="605.3" r="5.7" fill="none" stroke="#ececec" stroke-width="1"/>
  <circle cx="719.3" cy="605.3" r="5.8" fill="url(#g2)"/>
</svg>
<div class="abs" style="left:740.5px;top:604.2px;width:219.5px;height:2px;background:#757578;"></div>
<div class="abs" style="left:850px;top:600px;width:1px;height:10px;background:#717174;"></div>
<div class="abs" style="left:873px;top:599px;width:12px;height:12px;box-sizing:border-box;border:1.8px solid #cfcfcf;border-radius:50%;background:#4c4c4f;box-shadow:0 0 0 1.5px #4c4c4f;"></div>
<svg class="abs" style="left:738px;top:615px" width="18" height="22" viewBox="738 615 18 22">
  <path d="M741 617.6 V631.6 L744.3 628.6 L746.7 634 L749.2 632.9 L746.8 627.6 L751.2 627.4 Z" fill="#111" stroke="#f2f2f2" stroke-width="1.1" stroke-linejoin="round"/>
</svg>
<svg class="abs" style="left:690px;top:640px" width="150" height="18" viewBox="690 640 150 18">
  <circle cx="698.3" cy="648.4" r="6" fill="none" stroke="#c6c6c6" stroke-width="1.1"/>
  <rect x="697.6" y="647.3" width="1.5" height="4.4" fill="#c6c6c6"/><rect x="696.8" y="647.3" width="1.6" height="1" fill="#c6c6c6"/><rect x="696.6" y="651" width="3.5" height="0.9" fill="#c6c6c6"/>
  <circle cx="698.3" cy="645.4" r="0.95" fill="#c6c6c6"/>
  <path d="M817 643 Q817 642.2 817.8 642.2 H821.4 L822.8 643.6 H830 Q830.8 643.6 830.8 644.4 V651.4 Q830.8 652.2 830 652.2 H817.8 Q817 652.2 817 651.4 Z" fill="#c2c2c4"/>
  <path d="M817 644.6 H830.8" stroke="#4c4c4f" stroke-width="0.6"/>
</svg>
<div class="abs" style="left:846px;top:637px;width:113px;height:19px;border:1px solid #6e6e70;border-radius:2px;box-sizing:content-box;"></div>
<div class="abs t" id="opt" style="left:855px;top:641.5px;font-size:12px;line-height:14px;color:#ececec;letter-spacing:0.3px;">詳細オプション...</div>
</body>
</html>
